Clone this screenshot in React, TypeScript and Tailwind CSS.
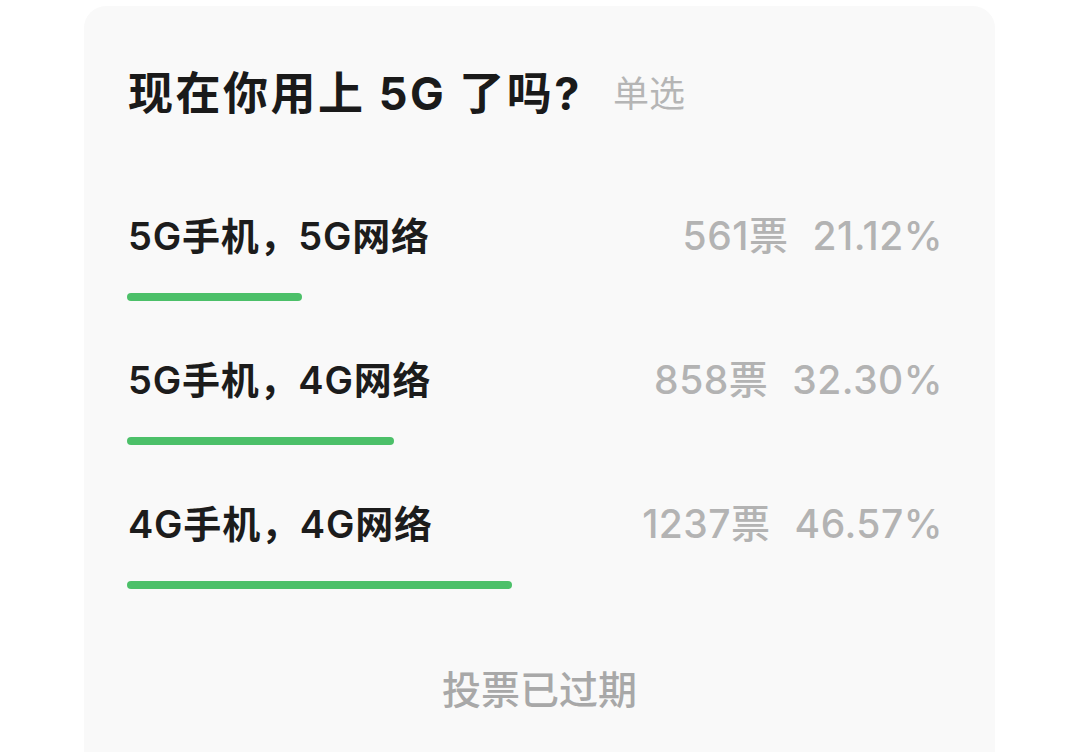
import React from "react";

const options = [
  { label: "5G手机，5G网络", votes: 561, pct: 21.12 },
  { label: "5G手机，4G网络", votes: 858, pct: 32.3 },
  { label: "4G手机，4G网络", votes: 1237, pct: 46.57 },
];

export default function App() {
  return (
    <div
      className="w-[1080px] h-[752px] bg-white overflow-hidden"
      style={{ fontFamily: 'Inter, "Noto Sans CJK SC", "Noto Sans", sans-serif' }}
    >
      <div className="ml-[84px] mt-[6px] w-[911px] h-[746px] rounded-t-[22px] bg-[#f9f9f9] pl-[43px] pr-[52px] pt-[64px]">
        <div className="flex items-center h-[48px]">
          <span className="text-[45px] leading-[48px] font-bold text-[#1a1a1a] tracking-[2.5px] ml-[1px]">
            现在你用上 5G 了吗?
          </span>
          <span className="ml-[31px] text-[36px] leading-[48px] text-[#b5b5b5]">单选</span>
        </div>
        <div className="mt-[94px] flex flex-col gap-[55px]">
          {options.map((o) => (
            <div key={o.label} className="flex flex-col">
              <div className="flex items-center justify-between h-[48px]">
                <span className="text-[38px] leading-[48px] font-semibold text-[#1c1c1c] tracking-[0.8px] ml-[1px]">
                  {o.label}
                </span>
                <span className="flex items-center gap-[24px] text-[39px] leading-[48px] font-medium text-[#b3b3b3] tracking-[0.5px]">
                  <span>{o.votes}票</span>
                  <span>{o.pct.toFixed(2)}%</span>
                </span>
              </div>
              <div className="mt-[33px] w-[827px] h-[8px]">
                <div
                  className="h-full rounded-full bg-[#4cc069]"
                  style={{ width: `${o.pct}%` }}
                />
              </div>
            </div>
          ))}
        </div>
        <div className="mt-[77px] ml-[-43px] mr-[-52px] h-[48px] flex items-center justify-center">
          <span className="text-[39px] leading-[48px] font-medium text-[#a8a8a8]">投票已过期</span>
        </div>
      </div>
    </div>
  );
}
